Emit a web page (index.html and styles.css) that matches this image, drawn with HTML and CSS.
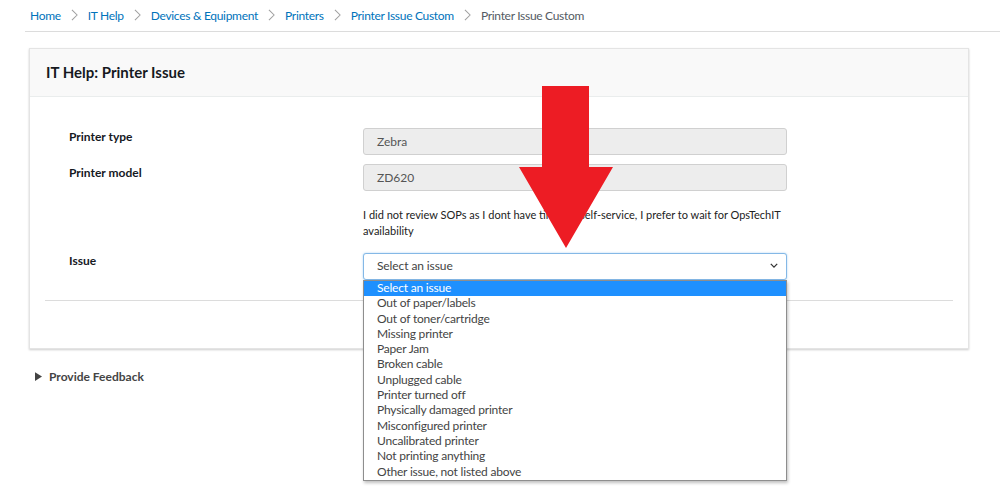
FILE: index.html
```html
<!DOCTYPE html>
<html>
<head>
<meta charset="utf-8">
<link rel="stylesheet" href="styles.css">
</head>
<body>
<div class="page">
  <nav class="crumbs">
    <a class="crumb">Home</a>
    <svg class="chev" viewBox="0 0 8 14"><path d="M1 1l6 6-6 6" fill="none" stroke="#a0a0a0" stroke-width="1.2"/></svg>
    <a class="crumb">IT Help</a>
    <svg class="chev" viewBox="0 0 8 14"><path d="M1 1l6 6-6 6" fill="none" stroke="#a0a0a0" stroke-width="1.2"/></svg>
    <a class="crumb">Devices &amp; Equipment</a>
    <svg class="chev" viewBox="0 0 8 14"><path d="M1 1l6 6-6 6" fill="none" stroke="#a0a0a0" stroke-width="1.2"/></svg>
    <a class="crumb">Printers</a>
    <svg class="chev" viewBox="0 0 8 14"><path d="M1 1l6 6-6 6" fill="none" stroke="#a0a0a0" stroke-width="1.2"/></svg>
    <a class="crumb">Printer Issue Custom</a>
    <svg class="chev" viewBox="0 0 8 14"><path d="M1 1l6 6-6 6" fill="none" stroke="#a0a0a0" stroke-width="1.2"/></svg>
    <span class="crumb current">Printer Issue Custom</span>
  </nav>

  <section class="card">
    <header class="card-head">IT Help: Printer Issue</header>
    <div class="card-body">
      <div class="form">
        <div class="label">Printer type</div>
        <div class="field"><div class="input">Zebra</div></div>
        <div class="label">Printer model</div>
        <div class="field"><div class="input">ZD620</div></div>
        <div class="label"></div>
        <div class="field help">I did not review SOPs as I dont have time for self-service, I prefer to wait for OpsTechIT availability</div>
        <div class="label issue-label">Issue</div>
        <div class="field select-wrap">
          <div class="select">
            <span>Select an issue</span>
            <svg class="sel-chev" viewBox="0 0 10 6"><path d="M1 1l4 4 4-4" fill="none" stroke="#333" stroke-width="1.6"/></svg>
          </div>
          <ul class="options">
            <li class="opt active">Select an issue</li>
            <li class="opt">Out of paper/labels</li>
            <li class="opt">Out of toner/cartridge</li>
            <li class="opt">Missing printer</li>
            <li class="opt">Paper Jam</li>
            <li class="opt">Broken cable</li>
            <li class="opt">Unplugged cable</li>
            <li class="opt">Printer turned off</li>
            <li class="opt">Physically damaged printer</li>
            <li class="opt">Misconfigured printer</li>
            <li class="opt">Uncalibrated printer</li>
            <li class="opt">Not printing anything</li>
            <li class="opt">Other issue, not listed above</li>
          </ul>
        </div>
      </div>
      <hr class="divider">
    </div>
  </section>

  <div class="feedback">
    <svg class="tri" viewBox="0 0 8 10"><path d="M0 0L8 5 0 10z" fill="#444"/></svg>
    <span>Provide Feedback</span>
  </div>

  <svg class="red-arrow" viewBox="0 0 94 162"><polygon points="23,0 70,0 70,81 94,81 47,162 0,81 23,81" fill="#ed1c24"/></svg>
</div>
</body>
</html>
```

FILE: styles.css
```css
* { box-sizing: border-box; }
body {
  margin: 0;
  font-family: Lato, "Open Sans", sans-serif;
  color: #16191f;
  background: #fff;
}
.page {
  position: relative;
  width: 1000px;
  height: 500px;
  overflow: hidden;
}
.crumbs {
  display: flex;
  align-items: center;
  gap: 10px;
  height: 32px;
  margin-left: 25px;
  padding-left: 5px;
  padding-bottom: 1px;
  border-bottom: 1px solid #dcdcdc;
  font-size: 12px;
  letter-spacing: -0.3px;
}
.crumb { color: #0073bb; text-decoration: none; }
.crumb.current { color: #545b64; }
.chev { width: 7px; height: 12px; }

.card {
  margin: 16px 0 0 29px;
  width: 940px;
  border: 1px solid #e4e4e4;
  box-shadow: 0 1px 2px rgba(0,0,0,0.2);
  background: #fff;
}
.card-head {
  height: 48px;
  display: flex;
  align-items: center;
  padding-left: 16px;
  padding-bottom: 1px;
  background: #f9f9f9;
  border-bottom: 1px solid #eaeded;
  font-size: 15px;
  font-weight: 700;
}
.card-body {
  padding: 31px 15px 47px 15px;
}
.form {
  display: grid;
  grid-template-columns: 294px 424px;
  row-gap: 9px;
  padding-left: 24px;
}
.label {
  font-size: 12px;
  font-weight: 700;
  padding-top: 1px;
}
.issue-label { padding-top: 0; }
.input {
  height: 27px;
  border: 1px solid #d0d0d0;
  border-radius: 3px;
  background: #ededed;
  color: #555;
  font-size: 12px;
  padding: 0 13px;
  display: flex;
  align-items: center;
}
.help {
  font-size: 11px;
  line-height: 16px;
  color: #222;
  padding-top: 7px;
  margin-bottom: 5px;
}
.select-wrap { position: relative; }
.select {
  height: 27px;
  border: 1px solid #84b8e6;
  border-radius: 3px;
  box-shadow: 0 0 2px rgba(102,175,233,0.6);
  background: #fff;
  color: #444;
  font-size: 12px;
  letter-spacing: -0.1px;
  padding: 0 8px 2px 13px;
  display: flex;
  align-items: center;
  justify-content: space-between;
}
.sel-chev { width: 8px; height: 5px; }
.options {
  position: absolute;
  left: 0;
  top: 27px;
  width: 424px;
  margin: 0;
  padding: 0;
  list-style: none;
  background: #fff;
  border: 1px solid #8e8e8e;
  box-shadow: 1px 2px 3px rgba(0,0,0,0.25);
  z-index: 5;
}
.opt {
  height: 15.3px;
  line-height: 14px;
  padding-left: 13px;
  font-size: 12px;
  letter-spacing: -0.2px;
  color: #444;
}
.opt.active { background: #1e90ff; color: #fff; }
.divider {
  margin: 20px 0 0 0;
  border: 0;
  border-top: 1px solid #dcdcdc;
  height: 0;
}
.feedback {
  display: flex;
  align-items: center;
  gap: 7px;
  margin: 20px 0 0 35px;
  font-size: 12px;
  font-weight: 700;
  color: #444;
}
.tri { width: 7px; height: 9px; }
.red-arrow {
  position: absolute;
  left: 519px;
  top: 86px;
  width: 94px;
  height: 162px;
  z-index: 10;
}
```
